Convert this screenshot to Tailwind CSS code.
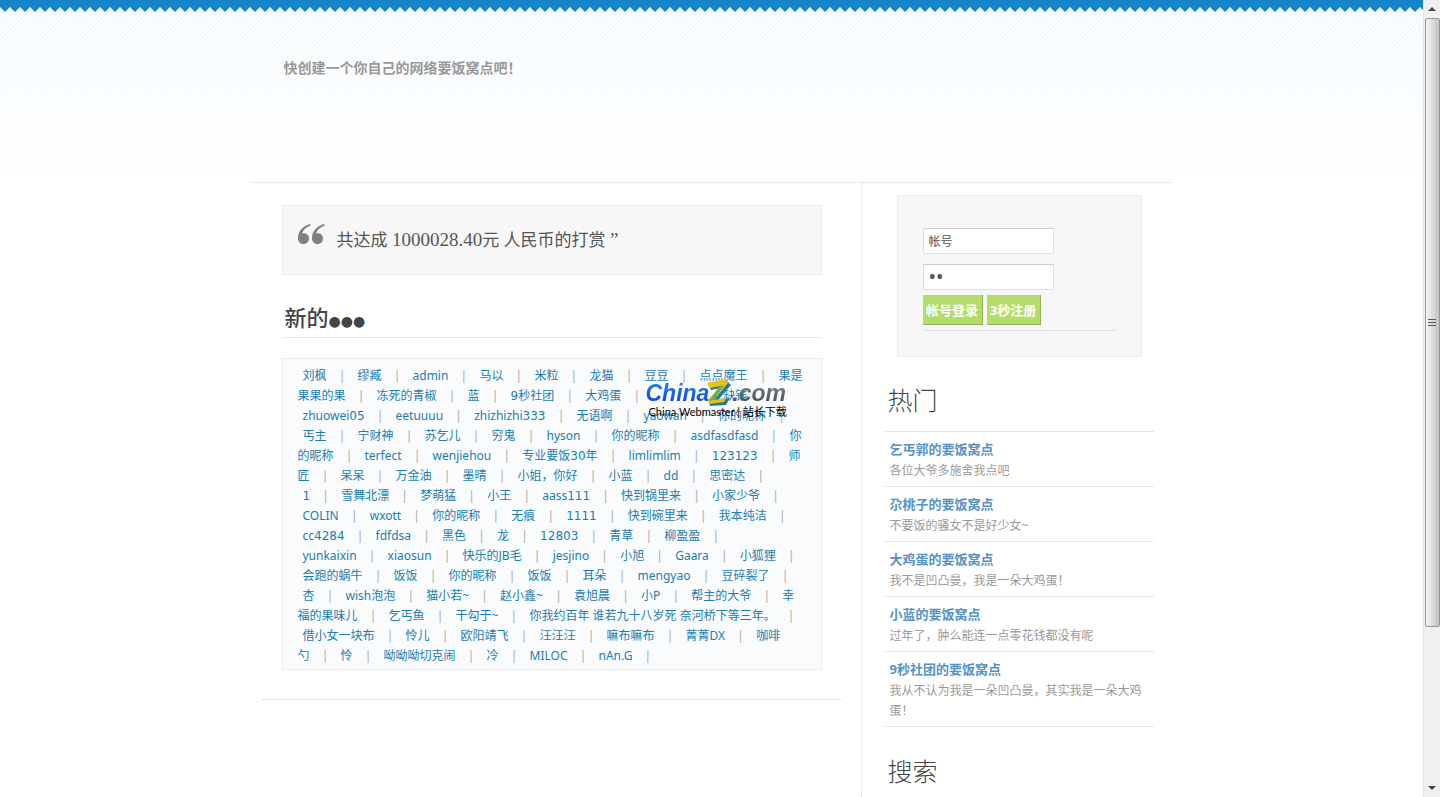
<!DOCTYPE html>
<html lang="zh-CN">
<head>
<meta charset="utf-8">
<meta name="viewport" content="width=device-width, initial-scale=1">
<title>网络要饭窝点</title>
<script src="https://cdn.jsdelivr.net/npm/@tailwindcss/browser@4"></script>
</head>
<body class="flex min-h-screen bg-white font-['Noto_Sans','Noto_Sans_CJK_SC',sans-serif] text-xs text-[#999]">
<div class="relative flex min-w-0 flex-1 flex-col">
  <!-- striped backdrop with the zigzag edge -->
  <svg class="absolute inset-x-0 top-0 -z-10 h-[182px] w-full" aria-hidden="true">
    <defs>
      <pattern id="stripes" width="5" height="5" patternUnits="userSpaceOnUse"><rect width="5" height="5" fill="#fafdff"/><path d="M-1 1L1 -1M0 5L5 0M4 6L6 4" stroke="#eaf2f8"/></pattern>
      <linearGradient id="fade" x2="0" y2="1"><stop stop-color="#fff" stop-opacity="0"/><stop offset="1" stop-color="#fff"/></linearGradient>
      <pattern id="zig" width="10" height="12" patternUnits="userSpaceOnUse"><path d="M0 0H10V7L5 12L0 7Z" fill="#1585c8"/></pattern>
    </defs>
    <rect width="100%" height="182" fill="url(#stripes)"/>
    <rect width="100%" height="182" fill="url(#fade)"/>
    <rect width="100%" height="12" fill="url(#zig)"/>
  </svg>

  <div class="mx-auto flex w-full max-w-[920px] flex-1 flex-col">
    <header class="h-[183px] border-b border-dotted border-[#d8d8d8] pt-[58px] pl-8">
      <p class="text-sm leading-5 font-bold text-[#999]">快创建一个你自己的网络要饭窝点吧！</p>
    </header>

    <div class="flex flex-1">
      <main class="min-w-0 flex-1 border-r border-dotted border-[#dcdcdc] pt-[22px] pr-[19px] pl-[10px]">
        <div class="border-b border-dotted border-[#d8d8d8] px-5 pb-[29px]">
          <blockquote class="flex h-[70px] items-start border border-[#ececec] bg-[#f7f7f7] pt-[18px] pl-[15px] text-[17px] text-[#555]">
            <svg class="h-5 w-7 shrink-0" viewBox="0 0 28 20" fill="#808080" aria-hidden="true"><path id="q" d="M12 0C5 2 0 7 0 14c0 4 2.500 6 5.500 6 3.200 0 5.500-2.300 5.500-5.500s-2.300-5.300-5.200-5.300c-.6 0-1.200.1-1.700.3C5 6 8 3.500 13 1.300Z"/><use href="#q" x="14"/></svg>
            <p class="ml-[11px] leading-8 whitespace-nowrap">共达成 <span class="font-['Liberation_Serif',serif] text-[19px] leading-none">1000028.40</span>元 人民币的打赏 <span class="font-['Liberation_Serif',serif] text-[19px] leading-none">”</span></p>
          </blockquote>

          <h2 class="mt-[26px] flex h-[37px] items-center border-b border-[#e8e8e8] pb-[5px] pl-[3px] text-[22px] leading-8 font-medium text-[#444]">新的<span class="pt-2 font-['DejaVu_Sans',sans-serif] text-[14px] leading-none">●●●</span></h2>

          <div class="relative mt-5 border border-[#ececec] bg-[#f9fbfd] px-[15px] pt-[7px] pb-[3px] leading-5 whitespace-nowrap text-[#1b7db0] [&_a>span]:font-['DejaVu_Sans'] [&_i]:w-[31px] [&_i]:shrink-0 [&_i]:text-center [&_i]:text-[#aaa] [&_i]:not-italic [&_p]:flex [&_p]:h-5">
            <p class="pl-[5px]"><a href="#">刘枫</a><i>|</i><a href="#">缪臧</a><i>|</i><a href="#">admin</a><i>|</i><a href="#">马以</a><i>|</i><a href="#">米粒</a><i>|</i><a href="#">龙猫</a><i>|</i><a href="#">豆豆</a><i>|</i><a href="#">点点魔王</a><i>|</i><a href="#">果是</a></p>
            <p><a href="#">果果的果</a><i>|</i><a href="#">冻死的青椒</a><i>|</i><a href="#">蓝</a><i>|</i><a href="#"><span>9</span>秒社团</a><i>|</i><a href="#">大鸡蛋</a><i>|</i><a href="#" class="pl-[71px]">缺钱</a></p>
            <p class="pl-[5px]"><a href="#">zhuowei<span>05</span></a><i>|</i><a href="#">eetuuuu</a><i>|</i><a href="#">zhizhizhi<span>333</span></a><i>|</i><a href="#">无语啊</a><i>|</i><a href="#">yaowan</a><i>|</i><a href="#">你的昵称</a><i>|</i></p>
            <p class="pl-[5px]"><a href="#">丐主</a><i>|</i><a href="#">宁财神</a><i>|</i><a href="#">苏乞儿</a><i>|</i><a href="#">穷鬼</a><i>|</i><a href="#">hyson</a><i>|</i><a href="#">你的昵称</a><i>|</i><a href="#">asdfasdfasd</a><i>|</i><a href="#">你</a></p>
            <p><a href="#">的昵称</a><i>|</i><a href="#">terfect</a><i>|</i><a href="#">wenjiehou</a><i>|</i><a href="#">专业要饭<span>30</span>年</a><i>|</i><a href="#">limlimlim</a><i>|</i><a href="#"><span>123123</span></a><i>|</i><a href="#">师</a></p>
            <p><a href="#">匠</a><i>|</i><a href="#">呆呆</a><i>|</i><a href="#">万金油</a><i>|</i><a href="#">墨晴</a><i>|</i><a href="#">小姐，你好</a><i>|</i><a href="#">小蓝</a><i>|</i><a href="#">dd</a><i>|</i><a href="#">思密达</a><i>|</i></p>
            <p class="pl-[5px]"><a href="#"><span>1</span></a><i>|</i><a href="#">雪舞北漂</a><i>|</i><a href="#">梦萌猛</a><i>|</i><a href="#">小王</a><i>|</i><a href="#">aass<span>111</span></a><i>|</i><a href="#">快到锅里来</a><i>|</i><a href="#">小家少爷</a><i>|</i></p>
            <p class="pl-[5px]"><a href="#">COLIN</a><i>|</i><a href="#">wxott</a><i>|</i><a href="#">你的昵称</a><i>|</i><a href="#">无痕</a><i>|</i><a href="#"><span>1111</span></a><i>|</i><a href="#">快到碗里来</a><i>|</i><a href="#">我本纯洁</a><i>|</i></p>
            <p class="pl-[5px]"><a href="#">cc<span>4284</span></a><i>|</i><a href="#">fdfdsa</a><i>|</i><a href="#">黑色</a><i>|</i><a href="#">龙</a><i>|</i><a href="#"><span>12803</span></a><i>|</i><a href="#">青草</a><i>|</i><a href="#">柳盈盈</a><i>|</i></p>
            <p class="pl-[5px]"><a href="#">yunkaixin</a><i>|</i><a href="#">xiaosun</a><i>|</i><a href="#">快乐的JB毛</a><i>|</i><a href="#">jesjino</a><i>|</i><a href="#">小旭</a><i>|</i><a href="#">Gaara</a><i>|</i><a href="#">小狐狸</a><i>|</i></p>
            <p class="pl-[5px]"><a href="#">会跑的蜗牛</a><i>|</i><a href="#">饭饭</a><i>|</i><a href="#">你的昵称</a><i>|</i><a href="#">饭饭</a><i>|</i><a href="#">耳朵</a><i>|</i><a href="#">mengyao</a><i>|</i><a href="#">豆碎裂了</a><i>|</i></p>
            <p class="pl-[5px]"><a href="#">杏</a><i>|</i><a href="#">wish泡泡</a><i>|</i><a href="#">猫小若~</a><i>|</i><a href="#">赵小鑫~</a><i>|</i><a href="#">袁旭晨</a><i>|</i><a href="#">小P</a><i>|</i><a href="#">帮主的大爷</a><i>|</i><a href="#">幸</a></p>
            <p><a href="#">福的果味儿</a><i>|</i><a href="#">乞丐鱼</a><i>|</i><a href="#">干勾于~</a><i>|</i><a href="#">你我约百年 谁若九十八岁死 奈河桥下等三年。</a><i>|</i></p>
            <p class="pl-[5px]"><a href="#">借小女一块布</a><i>|</i><a href="#">怜儿</a><i>|</i><a href="#">欧阳靖飞</a><i>|</i><a href="#">汪汪汪</a><i>|</i><a href="#">嘛布嘛布</a><i>|</i><a href="#">菁菁DX</a><i>|</i><a href="#">咖啡</a></p>
            <p><a href="#">勺</a><i>|</i><a href="#">怜</a><i>|</i><a href="#">呦呦呦切克闹</a><i>|</i><a href="#">冷</a><i>|</i><a href="#">MILOC</a><i>|</i><a href="#">nAn.G</a><i>|</i></p>

            <!-- ChinaZ stamp laid over the names -->
            <div class="absolute top-[21px] left-[363px] font-['Liberation_Sans',sans-serif]">
              <div class="flex h-[26px] items-center text-[23px] leading-7 font-bold italic">
                <span class="bg-linear-to-b from-[#2a86f2] to-[#1238d8] bg-clip-text text-transparent">China</span>
                <svg class="-ml-[3px] h-7 w-[26px]" viewBox="0 0 26 28" aria-hidden="true">
                  <path d="M2 5L20 1L25 6L13 20L24 19L20 26L4 27L3 22L15 9L5 11Z" fill="#28799e"/>
                  <path d="M1 4L19 0L22 4L8 21L20 19L18 23L3 25L2 21L14 7L4 9Z" fill="#e3c419"/>
                  <path d="M14 7L18 6L8 21L3 22Z" fill="#65a968"/>
                </svg>
                <span class="bg-linear-to-b from-[#8a9298] to-[#3c444b] bg-clip-text text-transparent">.com</span>
              </div>
              <div class="pl-[3px] font-['Lato','Noto_Sans_CJK_SC',sans-serif] text-[11px] leading-3 text-black">China Webmaster | 站长下载</div>
            </div>
          </div>
        </div>
      </main>

      <aside class="w-[310px] shrink-0 pt-3 pr-[18px] pl-[23px]">
        <form class="mx-3 h-[162px] border border-[#ececec] bg-[#f7f7f7] px-[25px] pt-8">
          <input type="text" value="帐号" aria-label="帐号" class="block h-[26px] w-[131px] border border-[#e0e0e0] border-t-[#ccc] bg-white px-[5px] text-xs text-[#555]">
          <input type="password" value="12" aria-label="密码" class="mt-[10px] block h-[26px] w-[131px] border border-[#e0e0e0] border-t-[#ccc] bg-white px-[5px] text-[20px] text-[#555]">
          <div class="mt-[5px] flex gap-1 border-b border-[#e0e0e0] pb-[5px] text-[13px] font-bold text-white">
            <button type="submit" class="h-[30px] w-[60px] border-r border-b border-[#8fb353] bg-[#b3dc6c] pt-[2px] whitespace-nowrap">帐号登录</button>
            <button type="button" class="h-[30px] w-[54px] border-r border-b border-[#8fb353] bg-[#b3dc6c] pt-[2px] whitespace-nowrap">3秒注册</button>
          </div>
        </form>

        <h3 class="mt-[25px] border-b border-[#e4e4e4] pb-[13px] pl-[3px] text-[25px] leading-9 font-light text-[#444]">热门</h3>
        <ul class="leading-5 [&_a]:block [&_a]:text-[13px] [&_a]:leading-[18px] [&_a]:font-bold [&_a]:text-[#5692c5] [&_p]:mt-[3px] [&>li]:border-b [&>li]:border-dotted [&>li]:border-[#d4d4d4] [&>li]:px-[5px] [&>li]:pt-2 [&>li]:pb-[5px]">
          <li><a href="#">乞丐郭的要饭窝点</a><p>各位大爷多施舍我点吧</p></li>
          <li><a href="#">尕桃子的要饭窝点</a><p>不要饭的骚女不是好少女~</p></li>
          <li><a href="#">大鸡蛋的要饭窝点</a><p>我不是凹凸曼，我是一朵大鸡蛋！</p></li>
          <li><a href="#">小蓝的要饭窝点</a><p>过年了，肿么能连一点零花钱都没有呢</p></li>
          <li><a href="#">9秒社团的要饭窝点</a><p>我从不认为我是一朵凹凸曼，其实我是一朵大鸡蛋！</p></li>
        </ul>
        <h3 class="mt-[26px] pl-[3px] text-[25px] leading-9 font-light text-[#444]">搜索</h3>
      </aside>
    </div>
  </div>
</div>

<!-- window scrollbar -->
<div class="flex w-[17px] shrink-0 flex-col items-center border-l border-[#e4e4e4] bg-[#f0f0f0]" aria-hidden="true">
  <svg class="h-[18px] w-4 shrink-0" viewBox="0 0 16 18"><path d="M4 11L8 7L12 11Z" fill="#444"/></svg>
  <div class="flex w-[15px] flex-[609] flex-col items-center justify-center gap-[2px] rounded-xs border border-[#979797] bg-linear-to-r from-[#f5f5f5] via-[#dcdcdf] to-[#c2c2c6]">
    <span class="h-px w-2 bg-[#555]"></span><span class="h-px w-2 bg-[#555]"></span><span class="h-px w-2 bg-[#555]"></span>
  </div>
  <div class="flex-[152]"></div>
  <svg class="h-[18px] w-4 shrink-0" viewBox="0 0 16 18"><path d="M4 7L8 11L12 7Z" fill="#444"/></svg>
</div>
</body>
</html>
